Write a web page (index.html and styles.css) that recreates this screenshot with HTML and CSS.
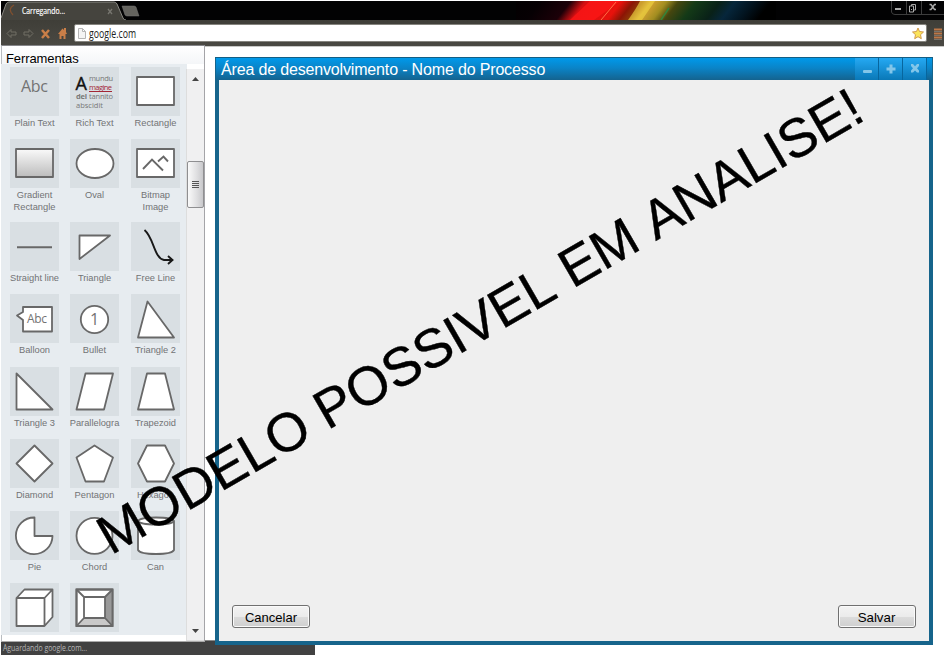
FILE: index.html
```html
<!DOCTYPE html>
<html lang="pt-BR">
<head>
<meta charset="utf-8">
<title>Carregando...</title>
<link rel="stylesheet" href="styles.css">
</head>
<body>
<div class="screen">
  <header class="browser">
    <div class="tabstrip">
      <svg class="tabs" width="140" height="19" viewBox="0 0 140 19">
        <path d="M0 19V17L5 3Q6 1 8 1H113Q115 1 116 3L122 17Q123 19 125 19Z" fill="#45443e"/>
        <path d="M0 17L5 3Q6 1 8 1H113Q115 1 116 3L122 17Q123 19 125 19" fill="none" stroke="#8a8983"/>
        <path d="M13 4Q6 8 12 14" fill="none" stroke="#80502f" stroke-width="1.3"/>
        <path d="M107 8l4 5M111 8l-4 5" stroke="#77766f" stroke-width="1.3"/>
        <path d="M121 5H133Q134 5 135 6L138 15H126Q125 15 124 14Z" fill="#65645f" stroke="#777" stroke-width=".5"/>
        <text x="21" y="13" class="tab-text" textLength="43" lengthAdjust="spacingAndGlyphs">Carregando...</text>
      </svg>
      <svg class="aurora" width="260" height="19" viewBox="0 0 260 19">
        <defs>
          <linearGradient id="rainbow">
            <stop offset="0" stop-color="#000"/><stop offset=".15" stop-color="#060003"/><stop offset=".25" stop-color="#1c0008"/><stop offset=".3" stop-color="#d50f12"/><stop offset=".42" stop-color="#e8120c"/><stop offset=".46" stop-color="#8c1505"/><stop offset=".49" stop-color="#8c3707"/><stop offset=".52" stop-color="#d8a333"/><stop offset=".57" stop-color="#a28d20"/><stop offset=".61" stop-color="#46460f"/><stop offset=".67" stop-color="#143a17"/><stop offset=".75" stop-color="#092118"/><stop offset=".8" stop-color="#06263b"/><stop offset=".86" stop-color="#021420"/><stop offset=".92" stop-color="#000"/>
          </linearGradient>
        </defs>
        <rect x="-20" width="300" height="19" fill="url(#rainbow)" transform="skewX(-38)"/>
        <path d="M54 19L74 0H104L78 19Z" fill="#ff1717" opacity=".75"/>
        <path d="M112 19Q120 8 124 0H139L126 19Z" fill="#ecd442" opacity=".65"/>
        <path d="M85 19L100 1" stroke="#ff7044"/>
        <path d="M145 19L153 7" stroke="#34843a" stroke-width="1.500"/>
      </svg>
      <svg class="winctl" width="54" height="14" viewBox="0 0 54 14">
        <path d="M1.500 0V11Q2 13.500 5 13.500H54M16.500 0V13M31.500 0V13" fill="none" stroke="#3d3d3d"/>
        <path d="M5 8H11" stroke="#aaa" stroke-width="2"/>
        <path d="M19.500 5H23.500V11H19.500ZM21.500 5V3.500H25.500V9H24M21 8.500H22" fill="none" stroke="#aaa"/>
        <path d="M39.500 3.500h1.500l3.500 5h1.500M46 3.500h-1.500l-3.500 5h-1.500" fill="none" stroke="#aaa" stroke-width="1.400"/>
      </svg>
    </div>
    <div class="toolbar">
      <svg class="nav" width="73" height="25" viewBox="0 0 73 25">
        <g fill="none" stroke="#706e65"><path d="M6 13.500l4-4V12h5v3h-5v2.500Z"/><path d="M32 13.500l-4-4V12h-5v3h5v2.500Z"/></g>
        <path d="M41 10l7 8M48 10l-7 8" stroke="#c97e48" stroke-width="2.500"/>
        <path d="M57 14l4.500-5.500 1.500 1.500v-2h2v4l1 2h-1.500v5h-2v-3h-2v3h-2v-5Z" fill="#c97e48"/>
      </svg>
      <div class="address">
        <svg width="8" height="11" viewBox="0 0 8 11"><path d="M.5.500H4.500L7.500 3.500V10.500H.5ZM4.500 .5V3.500H7.500" fill="#f4f4f4" stroke="#b5b5b5"/></svg>
        <svg class="url" width="60" height="16"><text x="0" y="13" textLength="47" lengthAdjust="spacingAndGlyphs">google.com</text></svg>
        <svg class="star" width="12" height="13" viewBox="0 0 12 13"><path d="M6 1l1.500 3.500 4 .5-3 2.700.8 4L6 9.700 2.700 11.700l.8-4L.5 5l4-.5Z" fill="#fbe45a" stroke="#d19a4c"/></svg>
      </div>
      <svg class="menu" width="10" height="14" viewBox="0 0 10 14"><path d="M1 2.500H9M1 6.500H9M1 10.500H9" stroke="#bd7747" stroke-width="2"/><path d="M1 4.500H9M1 8.500H9M1 12.500H9" stroke="#77736b"/></svg>
    </div>
  </header>

  <div class="workspace">
    <aside class="tools">
      <h1>Ferramentas</h1>
      <div class="tools-body">
        <div class="palette">
          <div class="tool"><svg viewBox="0 0 49 49"><text x="24.500" y="25" text-anchor="middle" class="abc" textLength="27">Abc</text></svg><span>Plain Text</span></div>
          <div class="tool"><svg viewBox="0 0 49 49"><text x="5.500" y="23" class="big-a">A</text><g class="tiny"><text x="19" y="14" textLength="24">mundu</text><text x="19" y="23" textLength="23" class="red">magine</text><text x="6" y="32" textLength="11" class="bold">del</text><text x="19" y="32" textLength="24">tannito</text><text x="6" y="41" textLength="27">abscidit</text></g><path d="M19 24.500H42" stroke="#a32735"/></svg><span>Rich Text</span></div>
          <div class="tool"><svg viewBox="0 0 49 49"><rect x="6" y="10" width="37" height="28" class="s"/></svg><span>Rectangle</span></div>
          <div class="tool"><svg viewBox="0 0 49 49"><defs><linearGradient id="gr" x2="0" y2="1"><stop stop-color="#fafafa"/><stop offset="1" stop-color="#bcbcbc"/></linearGradient></defs><rect x="6" y="10" width="37" height="28" class="s graded"/></svg><span>Gradient<br>Rectangle</span></div>
          <div class="tool"><svg viewBox="0 0 49 49"><ellipse cx="25" cy="24.500" rx="18.500" ry="14.500" class="s"/></svg><span>Oval</span></div>
          <div class="tool"><svg viewBox="0 0 49 49"><rect x="6" y="10" width="37" height="28" class="s"/><path d="M12 30l9-9.500 11 11M27 22.500l5.500-5 4.500 5" class="l"/></svg><span>Bitmap<br>Image</span></div>
          <div class="tool"><svg viewBox="0 0 49 49"><path d="M7 25.200H42" class="l"/></svg><span>Straight line</span></div>
          <div class="tool"><svg viewBox="0 0 49 49"><path d="M9.500 13.500H40L9.500 37Z" class="s"/></svg><span>Triangle</span></div>
          <div class="tool"><svg viewBox="0 0 49 49"><path d="M13.500 8C23 16 23 36 33 38H41M37 34l4.500 4-4.500 4" class="l dark"/></svg><span>Free Line</span></div>
          <div class="tool"><svg viewBox="0 0 49 49"><path d="M13 13H42V37.500H13V26L7 21.500 13 18Z" class="s"/><text x="27" y="29" text-anchor="middle" class="abc small" textLength="20">Abc</text></svg><span>Balloon</span></div>
          <div class="tool"><svg viewBox="0 0 49 49"><circle cx="24.500" cy="25.500" r="13.700" class="s"/><text x="24.500" y="31" text-anchor="middle" class="abc">1</text></svg><span>Bullet</span></div>
          <div class="tool"><svg viewBox="0 0 49 49"><path d="M16.500 7.500L43 43.500H7Z" class="s"/></svg><span>Triangle 2</span></div>
          <div class="tool"><svg viewBox="0 0 49 49"><path d="M6.500 6.500L42.500 42.500H6.500Z" class="s"/></svg><span>Triangle 3</span></div>
          <div class="tool"><svg viewBox="0 0 49 49"><path d="M15.500 6.500H43L34 42.500H6.500Z" class="s"/></svg><span>Parallelogra</span></div>
          <div class="tool"><svg viewBox="0 0 49 49"><path d="M16 6.500H34L43 42.500H7Z" class="s"/></svg><span>Trapezoid</span></div>
          <div class="tool"><svg viewBox="0 0 49 49"><path d="M24.500 6.500L42.500 24.500 24.500 42.500 6.500 24.500Z" class="s"/></svg><span>Diamond</span></div>
          <div class="tool"><svg viewBox="0 0 49 49"><path d="M24.500 6.500L43 18.500 34 42.500H15.500L6.500 18.500Z" class="s"/></svg><span>Pentagon</span></div>
          <div class="tool"><svg viewBox="0 0 49 49"><path d="M16 6.500H34L43 24.500 34 42.500H16L7 24.500Z" class="s"/></svg><span>Hexagon</span></div>
          <div class="tool"><svg viewBox="0 0 49 49"><path d="M24.500 6.500A18.300 18.300 0 1 0 42.500 25H24.500Z" class="s"/></svg><span>Pie</span></div>
          <div class="tool"><svg viewBox="0 0 49 49"><circle cx="24.500" cy="24.800" r="18" class="s"/></svg><span>Chord</span></div>
          <div class="tool"><svg viewBox="0 0 49 49"><path d="M7 10V39Q9 43 25 43T43 39V10Q41 6.500 25 6.500T7 10Q9 13.500 25 13.500T43 10" class="s"/></svg><span>Can</span></div>
          <div class="tool"><svg viewBox="0 0 49 49"><path d="M6.500 15L14.500 6.500H42.500V34L34.500 43H6.500ZM6.500 15H34.500V43M34.500 15L42.500 6.500" class="s"/></svg></div>
          <div class="tool"><svg viewBox="0 0 49 49"><path d="M6.500 6.500H42.500V43H6.500Z" class="s"/><path d="M42.500 6.500V43L35 35V14Z" fill="#999"/><path d="M6.500 43H42.500L35 35H14Z" fill="#c9c9c9"/><path d="M14 14H35V35H14ZM6.500 6.500L14 14M42.500 6.500L35 14M42.500 43L35 35M6.500 43L14 35" class="s"/><path d="M6.500 6.500H42.500V43H6.500Z" class="l"/></svg></div>
        </div>
        <div class="scroll">
          <svg width="7" height="4"><path d="M0 4L3.500 0 7 4Z" fill="#444"/></svg>
          <div class="thumb"><i></i><i></i><i></i><i></i></div>
          <svg class="down" width="7" height="4"><path d="M0 0H7L3.500 4Z" fill="#444"/></svg>
        </div>
      </div>
    </aside>

    <main class="window">
      <div class="titlebar">
        <h2>Área de desenvolvimento - Nome do Processo</h2>
        <div class="controls">
          <b><svg width="22" height="21"><rect x="8" y="12" width="9" height="3" rx="1"/></svg></b>
          <b><svg width="22" height="21"><path d="M10.500 6.500h3v3h3v3h-3v3h-3v-3h-3v-3h3Z"/></svg></b>
          <b><svg width="22" height="21"><path d="M8 6h2l2 2.300L14 6h2v2l-2 2.200 2 2.300v2h-2l-2-2-2 2H8v-2l2-2.300L8 8Z"/></svg></b>
        </div>
      </div>
      <div class="canvas">
        <button type="button" class="cancel">Cancelar</button>
        <button type="button">Salvar</button>
      </div>
    </main>
  </div>
  <footer><svg width="100" height="14"><text x="2" y="9.500" textLength="84" lengthAdjust="spacingAndGlyphs">Aguardando google.com...</text></svg></footer>
  <svg class="watermark" width="944" height="655"><text transform="translate(111 555.500) rotate(-30)" textLength="873">MODELO POSSIVEL EM ANALISE!</text></svg>
</div>
</body>
</html>
```
FILE: styles.css
```css
* { box-sizing: border-box; }
body { margin: 0; background: #fff; font-family: "Liberation Sans", Arial, sans-serif; }
svg { display: block; flex: none; }
.screen { position: relative; width: 944px; height: 655px; overflow: hidden; padding: 1px 0 0 1px; display: flex; flex-direction: column; }
.browser { height: 46px; flex: none; background: #45443e; border-bottom: 1px solid #c8c8c6; }
.tabstrip { height: 19px; background: #020203; display: flex; }
.aurora { margin-left: 375px; }
.winctl { margin-left: auto; }
.tab-text { font: 9px "Open Sans", sans-serif; fill: #fff; stroke: #fff; stroke-width: .2px; }
.toolbar { height: 26px; display: flex; background: linear-gradient(#3f3e38, #4a4943); }
.address { width: 853px; height: 18px; margin-top: 4px; display: flex; align-items: center; padding: 0 2px 0 3px; background: #fff; border: 1px solid #85847e; border-radius: 2px; }
.url { margin-left: 3px; font: 12px "Open Sans", sans-serif; fill: #222; overflow: visible; }
.star { margin-left: auto; }
.menu { margin: 7px 0 0 6px; }

.workspace { display: flex; height: 595px; flex: none; }
.tools { width: 204px; margin-top: -2px; height: 597px; background: #fff; border-top: 1px solid #858589; border-right: 1px solid #a4a4a8; border-left: 1px solid #b8bcc0; border-bottom: 1px solid #aaa; display: flex; flex-direction: column; z-index: 1; }
.tools h1 { margin: 0; height: 18px; padding: 4px 0 0 4px; font-size: 13px; line-height: 17px; font-weight: 400; color: #000; letter-spacing: -.1px; background: linear-gradient(#fff, #f4f6f8); position: relative; z-index: 1; }
.tools-body { display: flex; height: 577px; }
.palette { width: 186px; height: 571px; flex: none; margin-left: -1px; padding: 3px 0 0 9px; background: #e7ecf0; display: grid; grid-template-columns: 49px 49px 49px; column-gap: 11px; grid-template-rows: 72px 83px 72px 73px 72px 72px 72px 49px; }
.tool { text-align: center; }
.tool:nth-child(3n) { padding-left: 1px; width: 50px; }
.tool svg { width: 49px; height: 49px; background: #d9dfe3; }
.tool:nth-child(3n) svg { padding-right: 0; }
.tool span { display: block; margin: 1px -5px 0; font-size: 9.300px; line-height: 12px; color: #727375; white-space: nowrap; }
.s { fill: #fff; stroke: #686868; stroke-width: 1.800; stroke-linejoin: round; }
.graded { fill: url(#gr); }
.l { fill: none; stroke: #686868; stroke-width: 1.900; }
.dark { stroke: #181818; }
.abc { font: 16px "Open Sans", sans-serif; fill: #737373; }
.abc.small { font-size: 12px; }
.big-a { font: 18px "Open Sans", sans-serif; fill: #111; stroke: #111; stroke-width: .4px; }
.tiny { font: 7.500px "Open Sans", sans-serif; fill: #777; }
.red { fill: #a32735; }
.bold { font-weight: 700; }
.scroll { width: 18px; flex: none; margin: 5px -1px 0 -1px; height: 572px; border: 1px solid #ddd; border-width: 0 0 1px 1px; background: #f0f0f1; display: flex; flex-direction: column; align-items: center; padding: 8px 0 7px; }
.thumb { width: 17px; height: 47px; flex: none; margin-top: 80px; border: 1px solid #8f8f91; border-radius: 2px; background: linear-gradient(90deg, #fafafa, #dedee0 60%, #c8c8cb); display: flex; flex-direction: column; align-items: center; justify-content: center; gap: 1px; }
.thumb i { width: 7px; height: 1px; background: #555; }
.down { margin-top: auto; }

.window { margin: 10px 0 0 10px; width: 718px; height: 588px; background: #16648b; display: flex; flex-direction: column; z-index: 2; border-top: 1px solid #145e84; }
.titlebar { height: 22px; background: linear-gradient(#0099ea, #0a84c8 45%, #14638f); border: 0 solid #16648b; border-width: 0 1px; display: flex; justify-content: space-between; }
.titlebar h2 { margin: 0; padding-left: 5px; font-size: 16px; line-height: 23px; font-weight: 400; color: #fff; letter-spacing: -.16px; white-space: nowrap; }
.controls { display: flex; gap: 1px; padding-right: 6px; }
.controls b { width: 23px; height: 22px; background: linear-gradient(#25a9f3, #0a78b7); box-shadow: 1px 0 #07669e; }
.controls svg { fill: #83c6e9; }
.canvas { flex: 1; margin: 0 4px 4px; background: #efefef; display: flex; align-items: flex-end; justify-content: space-between; padding: 0 13px 13px; }
.canvas button { width: 78px; height: 23px; padding: 1px 1px 0 0; border: 1px solid #707070; border-radius: 3px; background: linear-gradient(#f3f3f3, #ebebeb 50%, #dcdcdc 51%, #cfcfcf); box-shadow: inset 0 0 0 1px #fafafa; font: 13.300px "Liberation Sans", Arial, sans-serif; color: #000; }
.canvas .cancel { padding-right: 0; font-size: 13px; }
footer { width: 314px; height: 15px; margin-top: -2px; background: #414141; border-top: 1px solid #888; }
footer text { font: 8.500px "Open Sans", sans-serif; fill: #b8b8b8; }
.watermark { position: absolute; left: 0; top: 0; z-index: 5; font: 54.500px "Liberation Sans", Arial, sans-serif; font-kerning: none; fill: #000; stroke: #000; stroke-width: .4px; pointer-events: none; }
```
